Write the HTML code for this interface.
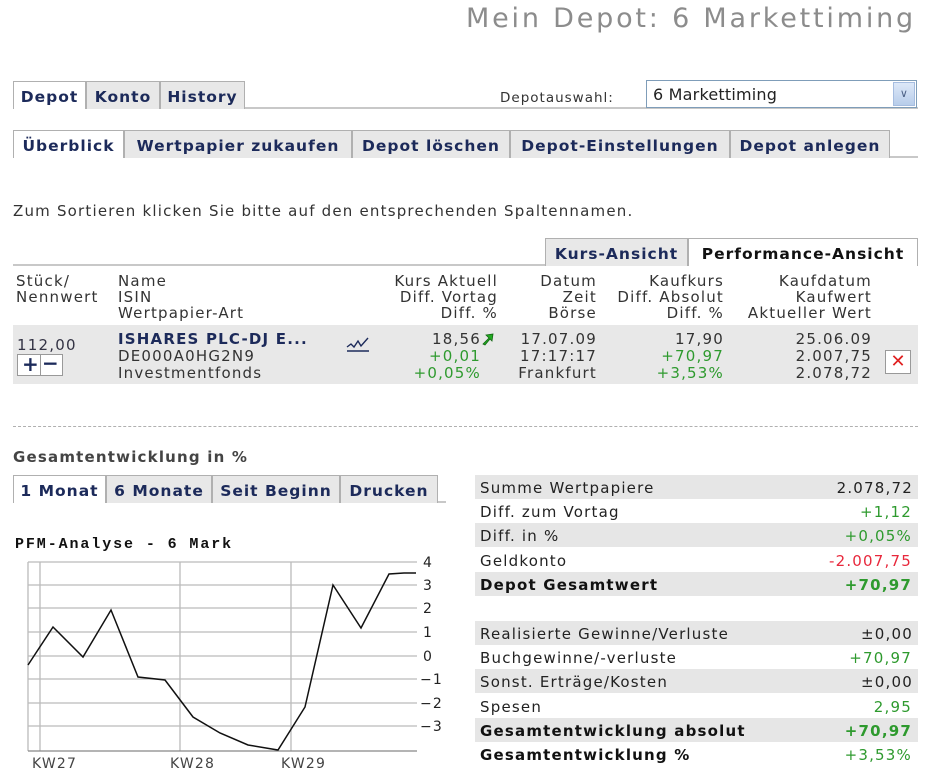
<!DOCTYPE html>
<html><head><meta charset="utf-8"><style>
*{margin:0;padding:0;box-sizing:border-box}
body{width:930px;height:771px;background:#fff;font-family:"DejaVu Sans","Liberation Sans",sans-serif;font-size:15px;color:#222;position:relative;overflow:hidden;letter-spacing:1.2px}
.a{position:absolute;white-space:nowrap}
.tab{position:absolute;height:28px;background:#e8e8e8;border:1px solid #b0b0b0;border-bottom:none;font-weight:bold;color:#1c2a5a;text-align:center;line-height:30px;font-size:15.5px;letter-spacing:1px;white-space:nowrap;overflow:hidden}
.tab.on{background:#fff;color:#1c2a5a}
.line{position:absolute;height:2px;background:#c8c8c8}
.g{color:#2e9a2e}
.r{color:#e8283c}
.row{position:absolute;left:475px;width:443px;height:24px;line-height:26px}
.row .l{position:absolute;left:5px}
.row .v{position:absolute;right:6px}
.gr{background:#e6e6e6}
.b{font-weight:bold;color:#111}
.hd{position:absolute;line-height:16px;color:#333;white-space:nowrap}
</style></head><body>
<div class="a" style="right:14px;top:3px;font-size:27px;color:#8c8c8c;letter-spacing:2.8px">Mein Depot: 6 Markettiming</div>

<div class="line" style="left:13px;top:107px;width:905px"></div>
<div class="tab on" style="left:13px;top:81px;width:73px">Depot</div>
<div class="tab" style="left:86px;top:81px;width:74px">Konto</div>
<div class="tab" style="left:160px;top:81px;width:85px">History</div>
<div class="a" style="left:500px;top:90px;font-size:13.5px;color:#333;letter-spacing:1px">Depotauswahl:</div>
<div class="a" style="left:646px;top:80px;width:271px;height:28px;border:1px solid #7f9db9;background:#fff;padding-left:6px;line-height:28px;font-size:16px;letter-spacing:.2px">6 Markettiming
<div style="position:absolute;right:1px;top:1px;width:22px;height:24px;background:linear-gradient(#dde8f8,#b8cdea);border:1px solid #a6bde0;color:#4d6185;text-align:center;line-height:22px;font-size:11px">&#8744;</div></div>

<div class="line" style="left:13px;top:156px;width:905px"></div>
<div class="tab on" style="left:13px;top:130px;width:111px">Überblick</div>
<div class="tab" style="left:124px;top:130px;width:228px">Wertpapier zukaufen</div>
<div class="tab" style="left:352px;top:130px;width:158px">Depot löschen</div>
<div class="tab" style="left:510px;top:130px;width:220px">Depot-Einstellungen</div>
<div class="tab" style="left:730px;top:130px;width:160px">Depot anlegen</div>

<div class="a" style="left:13px;top:202px;color:#333">Zum Sortieren klicken Sie bitte auf den entsprechenden Spaltennamen.</div>

<div class="line" style="left:13px;top:264px;width:905px"></div>
<div class="tab" style="left:545px;top:238px;width:143px">Kurs-Ansicht</div>
<div class="tab on" style="left:688px;top:238px;width:230px;color:#111">Performance-Ansicht</div>

<div class="hd" style="left:16px;top:273px">Stück/<br>Nennwert</div>
<div class="hd" style="left:118px;top:273px">Name<br>ISIN<br>Wertpapier-Art</div>
<div class="hd" style="right:432px;top:273px;text-align:right">Kurs Aktuell<br>Diff. Vortag<br>Diff. %</div>
<div class="hd" style="right:333px;top:273px;text-align:right">Datum<br>Zeit<br>Börse</div>
<div class="hd" style="right:206px;top:273px;text-align:right">Kaufkurs<br>Diff. Absolut<br>Diff. %</div>
<div class="hd" style="right:58px;top:273px;text-align:right">Kaufdatum<br>Kaufwert<br>Aktueller Wert</div>

<div class="a" style="left:13px;top:325px;width:905px;height:59px;background:#e8e8e8"></div>
<div class="hd" style="left:17px;top:337px;color:#334">112,00</div>
<div class="a" style="left:17px;top:354px;width:46px;height:22px;border:1px solid #999;background:#fff;font-weight:bold;font-size:20px;line-height:18px;color:#1c2a5a;letter-spacing:0"><span style="position:absolute;left:4px">+</span><span style="position:absolute;left:24px;top:-1px">&minus;</span><div style="position:absolute;left:22px;top:0;width:1px;height:20px;background:#999"></div></div>
<div class="hd" style="left:118px;top:331px;line-height:17px"><b style="color:#1c2a5a">ISHARES PLC-DJ E...</b><br>DE000A0HG2N9<br>Investmentfonds</div>
<svg class="a" style="left:346px;top:336px" width="26" height="18"><path d="M1 11 L5 8 L8 11 L12 5 L15 10 L22 2" fill="none" stroke="#1c2a5a" stroke-width="1.4"/><path d="M1 15 H23" stroke="#1c2a5a" stroke-width="1.4"/></svg>
<div class="hd" style="right:449px;top:331px;text-align:right;line-height:17px">18,56<br><span class="g">+0,01</span><br><span class="g">+0,05%</span></div>
<svg class="a" style="left:481px;top:332px" width="14" height="14"><path d="M2 12 L8 6 L5 3 L12 2 L11 9 L9 7 L4 13Z" fill="#22aa22" stroke="#116611" stroke-width=".8"/></svg>
<div class="hd" style="right:333px;top:331px;text-align:right;line-height:17px">17.07.09<br>17:17:17<br>Frankfurt</div>
<div class="hd" style="right:206px;top:331px;text-align:right;line-height:17px">17,90<br><span class="g">+70,97</span><br><span class="g">+3,53%</span></div>
<div class="hd" style="right:58px;top:331px;text-align:right;line-height:17px">25.06.09<br>2.007,75<br>2.078,72</div>
<div class="a" style="left:885px;top:350px;width:26px;height:24px;border:1px solid #999;background:#fff;color:#e02020;text-align:center;line-height:22px;font-size:18px;letter-spacing:0">✕</div>

<div class="a" style="left:13px;top:426px;width:905px;border-top:1px dashed #b0b0b0"></div>

<div class="a" style="left:13px;top:448px;font-weight:bold;color:#444;font-size:15px">Gesamtentwicklung in %</div>
<div class="line" style="left:13px;top:501px;width:433px"></div>
<div class="tab on" style="left:13px;top:475px;width:93px">1 Monat</div>
<div class="tab" style="left:106px;top:475px;width:106px">6 Monate</div>
<div class="tab" style="left:212px;top:475px;width:128px">Seit Beginn</div>
<div class="tab" style="left:340px;top:475px;width:98px">Drucken</div>

<div class="a" style="left:15px;top:536px;font-family:'Liberation Mono','DejaVu Sans Mono',monospace;font-weight:bold;font-size:15px;letter-spacing:1.9px;color:#111">PFM-Analyse - 6 Mark</div>
<svg class="a" style="left:0;top:555px" width="460" height="216" font-family="DejaVu Sans, sans-serif" font-size="14" fill="#222">
<g stroke="#bbb" stroke-width="1.3">
<line x1="28" y1="7" x2="417" y2="7"/><line x1="28" y1="30" x2="417" y2="30"/><line x1="28" y1="53" x2="417" y2="53"/><line x1="28" y1="77" x2="417" y2="77"/><line x1="28" y1="101" x2="417" y2="101"/><line x1="28" y1="124" x2="417" y2="124"/><line x1="28" y1="148" x2="417" y2="148"/><line x1="28" y1="171" x2="417" y2="171"/>
<line x1="28" y1="7" x2="28" y2="196"/><line x1="40" y1="7" x2="40" y2="196"/><line x1="180" y1="7" x2="180" y2="196"/><line x1="291" y1="7" x2="291" y2="196"/>
</g>
<line x1="28" y1="196" x2="417" y2="196" stroke="#888" stroke-width="1.3"/>
<polyline fill="none" stroke="#111" stroke-width="1.5" points="28,110 53,72 83,102 111,55 138,122 165,125 193,162 220,178 248,190 278,195 305,152 333,30 361,73 389,19 404,18 416,18"/>
<g text-anchor="start"><text x="423" y="12">4</text><text x="423" y="35">3</text><text x="423" y="58">2</text><text x="423" y="82">1</text><text x="423" y="106">0</text><text x="420" y="129">−1</text><text x="420" y="153">−2</text><text x="420" y="176">−3</text></g>
<text x="32" y="213" fill="#444">KW27</text><text x="170" y="213" fill="#444">KW28</text><text x="281" y="213" fill="#444">KW29</text>
</svg>

<div class="row gr" style="top:475px"><span class="l">Summe Wertpapiere</span><span class="v" style="right:5px">2.078,72</span></div>
<div class="row" style="top:499px"><span class="l">Diff. zum Vortag</span><span class="v g">+1,12</span></div>
<div class="row gr" style="top:523px"><span class="l">Diff. in %</span><span class="v g">+0,05%</span></div>
<div class="row" style="top:548px"><span class="l">Geldkonto</span><span class="v r">-2.007,75</span></div>
<div class="row gr b" style="top:572px"><span class="l">Depot Gesamtwert</span><span class="v g">+70,97</span></div>

<div class="row gr" style="top:621px"><span class="l">Realisierte Gewinne/Verluste</span><span class="v" style="right:5px">±0,00</span></div>
<div class="row" style="top:645px"><span class="l">Buchgewinne/-verluste</span><span class="v g">+70,97</span></div>
<div class="row gr" style="top:669px"><span class="l">Sonst. Erträge/Kosten</span><span class="v" style="right:5px">±0,00</span></div>
<div class="row" style="top:694px"><span class="l">Spesen</span><span class="v g">2,95</span></div>
<div class="row gr b" style="top:718px"><span class="l">Gesamtentwicklung absolut</span><span class="v g">+70,97</span></div>
<div class="row b" style="top:742px"><span class="l">Gesamtentwicklung %</span><span class="v g" style="font-weight:normal">+3,53%</span></div>
</body></html>
